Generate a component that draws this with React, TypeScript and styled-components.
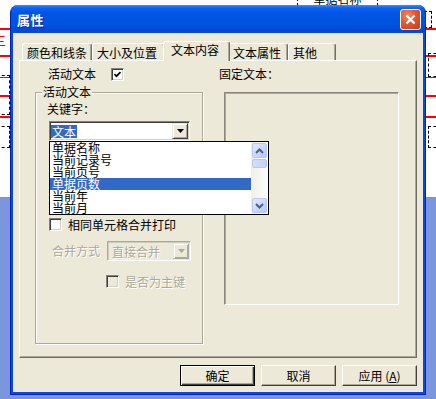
import React from "react";
import styled, { createGlobalStyle, css } from "styled-components";

const FONT = `"Noto Sans CJK SC", "DejaVu Sans", sans-serif`;

const GlobalStyle = createGlobalStyle`
  html, body { margin: 0; padding: 0; }
  body {
    width: 436px;
    height: 399px;
    overflow: hidden;
    font-family: ${FONT};
    font-size: 12px;
  }
`;

/* ---------- report designer behind the dialog ---------- */

const Desktop = styled.div`
  position: relative;
  width: 436px;
  height: 399px;
  overflow: hidden;
  background: linear-gradient(to bottom, #fff 0, #fff 197px, #7b96dd 197px);
`;

const RedLine = styled.div<{ $top: number; $h: number }>`
  position: absolute;
  left: 0;
  right: 0;
  top: ${(p) => p.$top}px;
  height: ${(p) => p.$h}px;
  background: #ff0000;
`;

const DashBox = styled.div<{ $left: number; $top: number; $w: number; $h: number }>`
  position: absolute;
  left: ${(p) => p.$left}px;
  top: ${(p) => p.$top}px;
  width: ${(p) => p.$w}px;
  height: ${(p) => p.$h}px;
  box-sizing: border-box;
  border: 1px dashed #000;
  font-size: 12px;
  line-height: 12px;
  color: #000;
  display: flex;
  align-items: flex-end;
  justify-content: center;
  overflow: hidden;
`;

const RedText = styled.div`
  position: absolute;
  left: -6px;
  top: 35px;
  color: #ff0000;
  font-size: 12px;
  line-height: 12px;
`;

/* ---------- window ---------- */

const Window = styled.div`
  position: absolute;
  left: 10px;
  top: 5px;
  width: 416px;
  height: 390px;
  box-sizing: border-box;
  display: flex;
  flex-direction: column;
  background: #0a48e2;
  border: 1px solid #0022b8;
  border-top: none;
  border-radius: 8px 8px 0 0;
  overflow: hidden;
`;

const TitleBar = styled.div`
  height: 28px;
  flex: none;
  display: flex;
  align-items: center;
  padding: 0 4px 0 6px;
  background: linear-gradient(
    to bottom,
    #3a8cff 0,
    #0a62f4 3px,
    #0055e5 8px,
    #0052e0 20px,
    #0048d2 26px,
    #0a48e2 28px
  );
`;

const Title = styled.span`
  font-family: ${FONT};
  font-weight: bold;
  font-size: 13px;
  color: #fff;
  text-shadow: 1px 1px #0c2788;
  letter-spacing: 0.5px;
`;

const CloseButton = styled.div`
  margin-left: auto;
  margin-top: 1px;
  width: 21px;
  height: 21px;
  box-sizing: border-box;
  border: 1px solid #fff;
  border-radius: 3px;
  background: radial-gradient(circle at 35% 30%, #f08a66 0, #e2582f 45%, #c33a18 100%);
  display: flex;
  align-items: center;
  justify-content: center;
`;

const Body = styled.div`
  flex: 1;
  margin: 0 2px 2px 2px;
  background: #ece9d8;
  display: flex;
  flex-direction: column;
  padding: 8px 6px 6px 6px;
  color: #000;
`;

/* ---------- tabs ---------- */

const TabStrip = styled.div`
  display: flex;
  align-items: flex-end;
  height: 19px;
  margin-left: 3px;
  position: relative;
  z-index: 1;
`;

const Tab = styled.div<{ $active?: boolean; $w: number }>`
  box-sizing: border-box;
  width: ${(p) => p.$w}px;
  height: 17px;
  padding: 3px 0 0 4px;
  font-size: 12px;
  line-height: 12px;
  white-space: nowrap;
  background: #ece9d8;
  border-top: 1px solid #fff;
  border-left: 1px solid #fff;
  border-right: 1px solid #716f64;
  box-shadow: inset -1px 0 #aca899;
  border-radius: 3px 3px 0 0;
  ${(p) =>
    p.$active &&
    css`
      position: relative;
      z-index: 2;
      height: 20px;
      padding: 2px 0 0 7px;
      margin: 0 -2px -1px -2px;
    `}
`;

const Panel = styled.div`
  box-sizing: border-box;
  height: 298px;
  flex: none;
  border: 1px solid;
  border-color: #fff #716f64 #716f64 #fff;
  box-shadow: inset -1px -1px #aca899;
  padding: 6px 0 0 15px;
  display: flex;
  flex-direction: column;
`;

const Row = styled.div`
  display: grid;
  grid-template-columns: 168px 179px;
  column-gap: 16px;
`;

const TopLabel = styled.div`
  display: flex;
  align-items: center;
  gap: 15px;
  height: 14px;
  padding-left: 13px;
  line-height: 12px;
`;

const PlainLabel = styled.div`
  line-height: 14px;
  height: 14px;
`;

const Columns = styled(Row)`
  margin-top: 11px;
  align-items: start;
`;

const Group = styled.div`
  position: relative;
  box-sizing: border-box;
  height: 252px;
  border: 1px solid #aca899;
  box-shadow: inset 1px 1px #fff, 1px 1px #fff;
  padding-left: 11px;
  display: flex;
  flex-direction: column;
  align-items: flex-start;
`;

const Legend = styled.div`
  margin: -7px 0 0 -5px;
  padding: 0 1px;
  background: #ece9d8;
  line-height: 12px;
  height: 12px;
`;

const Caption = styled.div<{ $mt: number; $ml?: number }>`
  margin-top: ${(p) => p.$mt}px;
  margin-left: ${(p) => p.$ml ?? 0}px;
  line-height: 12px;
  height: 12px;
`;

const FixedFrame = styled.div`
  box-sizing: border-box;
  margin-left: 5px;
  width: 175px;
  height: 213px;
  border: 1px solid;
  border-color: #8a887c #fff #fff #8a887c;
  box-shadow: inset 1px 1px #aca899;
`;

/* ---------- combo box ---------- */

const Combo = styled.div<{ $disabled?: boolean; $w: number }>`
  position: relative;
  box-sizing: border-box;
  width: ${(p) => p.$w}px;
  height: 20px;
  display: flex;
  align-items: center;
  padding: 0 1px;
  background: ${(p) => (p.$disabled ? "#ece9d8" : "#fff")};
  border: 1px solid;
  border-color: ${(p) => (p.$disabled ? "#aca899 #fff #fff #aca899" : "#808080 #fff #fff #808080")};
  box-shadow: ${(p) =>
    p.$disabled
      ? "inset 1px 1px #d0cdbd"
      : "inset 1px 1px #404040, inset -1px -1px #d4d0c8"};
  color: ${(p) => (p.$disabled ? "#aca899" : "#000")};
`;

const ComboText = styled.span<{ $selected?: boolean }>`
  line-height: 13px;
  height: 13px;
  padding: 0 1px;
  ${(p) =>
    p.$selected
      ? css`
          background: #316ac5;
          color: #fff;
        `
      : css`
          margin-left: 2px;
          text-shadow: 1px 1px #fff;
        `}
`;

const DropButton = styled.div<{ $disabled?: boolean }>`
  margin-left: auto;
  box-sizing: border-box;
  width: 16px;
  height: 16px;
  background: #ece9d8;
  border: 1px solid;
  border-color: ${(p) => (p.$disabled ? "#ece9d8 #aca899 #aca899 #ece9d8" : "#ece9d8 #404040 #404040 #ece9d8")};
  box-shadow: inset 1px 1px #fff, inset -1px -1px #aca899;
  display: flex;
  align-items: center;
  justify-content: center;
`;

const DropList = styled.div`
  position: absolute;
  left: -1px;
  top: calc(100% + 1px);
  width: 220px;
  height: 74px;
  box-sizing: border-box;
  border: 1px solid #000;
  background: #fff;
  display: flex;
  z-index: 5;
`;

const Items = styled.div`
  flex: 1;
  display: flex;
  flex-direction: column;
`;

const Item = styled.div<{ $selected?: boolean }>`
  height: 12px;
  line-height: 12px;
  padding-left: 2px;
  white-space: nowrap;
  background: ${(p) => (p.$selected ? "#316ac5" : "transparent")};
  color: ${(p) => (p.$selected ? "#fff" : "#000")};
`;

const ScrollBar = styled.div`
  width: 17px;
  box-sizing: border-box;
  padding: 1px;
  display: flex;
  flex-direction: column;
  background: linear-gradient(to right, #f0efe8, #fefefb);
`;

const ScrollButton = styled.div`
  box-sizing: border-box;
  width: 15px;
  height: 15px;
  border: 1px solid #b6c9f4;
  border-radius: 2px;
  background: linear-gradient(135deg, #e3ebff 0, #c6d6fc 60%, #b3c8f7 100%);
  display: flex;
  align-items: center;
  justify-content: center;
`;

const Thumb = styled.div`
  box-sizing: border-box;
  width: 15px;
  height: 9px;
  margin-top: 1px;
  border: 1px solid #b6c9f4;
  border-radius: 2px;
  background: linear-gradient(to right, #d2defd, #c3d3fb);
`;

const Spacer = styled.div`
  flex: 1;
`;

/* ---------- checkbox ---------- */

const CheckRow = styled.div<{ $mt: number; $ml: number; $disabled?: boolean }>`
  display: flex;
  align-items: center;
  gap: 6px;
  margin-top: ${(p) => p.$mt}px;
  margin-left: ${(p) => p.$ml}px;
  line-height: 12px;
  color: ${(p) => (p.$disabled ? "#aca899" : "#000")};
  text-shadow: ${(p) => (p.$disabled ? "1px 1px #fff" : "none")};
`;

const Box = styled.span<{ $disabled?: boolean }>`
  box-sizing: border-box;
  width: 13px;
  height: 13px;
  flex: none;
  display: inline-flex;
  align-items: center;
  justify-content: center;
  background: ${(p) => (p.$disabled ? "#ece9d8" : "#fff")};
  border: 1px solid;
  border-color: #808080 #fff #fff #808080;
  box-shadow: inset 1px 1px #404040, inset -1px -1px #d4d0c8;
`;

const MergeRow = styled.div`
  display: flex;
  align-items: center;
  gap: 7px;
  margin-top: 10px;
  margin-left: 5px;
  color: #aca899;
  text-shadow: 1px 1px #fff;
  line-height: 12px;
`;

/* ---------- buttons ---------- */

const ButtonRow = styled.div`
  display: flex;
  justify-content: flex-end;
  gap: 6px;
  margin-top: 7px;
`;

const Button = styled.button<{ $default?: boolean }>`
  box-sizing: border-box;
  width: 75px;
  height: 21px;
  padding: 0;
  font-family: ${FONT};
  font-size: 12px;
  line-height: 12px;
  color: #000;
  background: #ece9d8;
  border: 1px solid;
  border-color: #fff #404040 #404040 #fff;
  box-shadow: inset -1px -1px #aca899;
  ${(p) =>
    p.$default &&
    css`
      border-color: #000;
      box-shadow: inset 1px 1px #fff, inset -1px -1px #404040, inset -2px -2px #aca899;
    `}
`;

const Arrow = ({ color }: { color: string }) => (
  <svg width="7" height="4" viewBox="0 0 7 4">
    <polygon points="0,0 7,0 3.5,4" fill={color} />
  </svg>
);

const Chevron = ({ up }: { up?: boolean }) => (
  <svg width="9" height="6" viewBox="0 0 9 6">
    <polyline
      points={up ? "1,5 4.5,1.5 8,5" : "1,1 4.5,4.5 8,1"}
      fill="none"
      stroke="#4d6185"
      strokeWidth="2"
    />
  </svg>
);

const Check = () => (
  <svg width="7" height="7" viewBox="0 0 7 7">
    <polyline points="0.5,3 2.5,5.2 6.5,1" fill="none" stroke="#000" strokeWidth="1.7" />
  </svg>
);

const items = ["单据名称", "当前记录号", "当前页号", "单据页数", "当前年", "当前月"];

const tabs = [
  { label: "颜色和线条", w: 70 },
  { label: "大小及位置", w: 73 },
  { label: "文本内容", w: 67, active: true },
  { label: "文本属性", w: 60 },
  { label: "其他", w: 48 },
];

export default function App() {
  return (
    <Desktop>
      <GlobalStyle />
      <RedLine $top={28} $h={2} />
      <RedLine $top={55} $h={2} />
      <RedLine $top={77} $h={1} />
      <RedLine $top={95} $h={2} />
      <RedLine $top={116} $h={2} />
      <RedText>三</RedText>
      <DashBox $left={297} $top={-12} $w={81} $h={18}>单据名称</DashBox>
      <DashBox $left={380} $top={11} $w={52} $h={17} />
      <DashBox $left={-40} $top={75} $w={50} $h={40} />
      <DashBox $left={428} $top={53} $w={30} $h={24} />
      <DashBox $left={-30} $top={126} $w={40} $h={22}>丽</DashBox>
      <DashBox $left={428} $top={126} $w={30} $h={22} />

      <Window>
        <TitleBar>
          <Title>属性</Title>
          <CloseButton>
            <svg width="11" height="11" viewBox="0 0 11 11">
              <path d="M1.5 1.5 L9.5 9.5 M9.5 1.5 L1.5 9.5" stroke="#fff" strokeWidth="2.2" />
            </svg>
          </CloseButton>
        </TitleBar>
        <Body>
          <TabStrip>
            {tabs.map((t) => (
              <Tab key={t.label} $w={t.w} $active={t.active}>
                {t.label}
              </Tab>
            ))}
          </TabStrip>
          <Panel>
            <Row>
              <TopLabel>
                <span>活动文本</span>
                <Box>
                  <Check />
                </Box>
              </TopLabel>
              <PlainLabel>固定文本：</PlainLabel>
            </Row>
            <Columns>
              <Group>
                <Legend>活动文本</Legend>
                <Caption $mt={5}>关键字：</Caption>
                <Combo $w={141} style={{ marginTop: 6, marginLeft: 2 }}>
                  <ComboText $selected>文本</ComboText>
                  <DropButton>
                    <Arrow color="#000" />
                  </DropButton>
                  <DropList>
                    <Items>
                      {items.map((it) => (
                        <Item key={it} $selected={it === "单据页数"}>
                          {it}
                        </Item>
                      ))}
                    </Items>
                    <ScrollBar>
                      <ScrollButton>
                        <Chevron up />
                      </ScrollButton>
                      <Thumb />
                      <Spacer />
                      <ScrollButton>
                        <Chevron />
                      </ScrollButton>
                    </ScrollBar>
                  </DropList>
                </Combo>
                <CheckRow $mt={77} $ml={2}>
                  <Box />
                  <span>相同单元格合并打印</span>
                </CheckRow>
                <MergeRow>
                  <span>合并方式</span>
                  <Combo $w={84} $disabled>
                    <ComboText>直接合并</ComboText>
                    <DropButton $disabled>
                      <Arrow color="#aca899" />
                    </DropButton>
                  </Combo>
                </MergeRow>
                <CheckRow $mt={14} $ml={59} $disabled>
                  <Box $disabled />
                  <span>是否为主键</span>
                </CheckRow>
              </Group>
              <FixedFrame />
            </Columns>
          </Panel>
          <ButtonRow>
            <Button $default>确定</Button>
            <Button>取消</Button>
            <Button>
              应用 (<u>A</u>)
            </Button>
          </ButtonRow>
        </Body>
      </Window>
    </Desktop>
  );
}
